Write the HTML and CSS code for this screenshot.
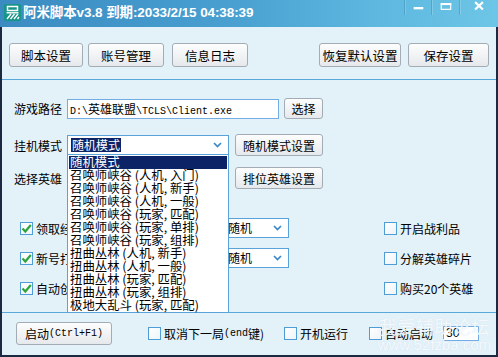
FILE: index.html
```html
<!DOCTYPE html>
<html lang="zh-CN">
<head>
<meta charset="utf-8">
<title>阿米脚本</title>
<link rel="stylesheet" href="styles.css">
</head>
<body>
<div class="window">
  <div class="titlebar">
    <svg class="app-icon" width="17" height="17" viewBox="0 0 17 17">
      <rect x="0" y="0" width="17" height="17" rx="2" fill="#17958b"/>
      <rect x="3.5" y="2.5" width="10" height="4" fill="none" stroke="#fff" stroke-width="1.5"/>
      <path d="M2.5 8.8h12" stroke="#fff" stroke-width="1.4"/>
      <path d="M3 15l4-5M6.5 15l4-5M10 15l4-5M13.5 15l1.5-2" stroke="#fff" stroke-width="1.4"/>
    </svg>
    <span class="title">阿米脚本v3.8 到期:2033/2/15 04:38:39</span>
    <div class="controls">
      <svg class="ctl ctl-min" width="27" height="15" viewBox="0 0 27 15"><rect x="9" y="7" width="10" height="2.4" fill="#fff"/></svg>
      <svg class="ctl ctl-max" width="28" height="15" viewBox="0 0 28 15"><rect x="9.6" y="3.6" width="9.8" height="5.8" fill="none" stroke="#fff" stroke-width="1.2"/><rect x="9" y="3" width="11" height="2" fill="#fff"/></svg>
      <svg class="ctl ctl-close" width="39" height="15" viewBox="0 0 39 15"><path d="M15.5 2l8 7.5M23.5 2l-8 7.5" stroke="#fff" stroke-width="2.2"/></svg>
    </div>
  </div>

  <div class="body">
    <div class="toolbar">
      <button class="btn tb-1">脚本设置</button>
      <button class="btn tb-2">账号管理</button>
      <button class="btn tb-3">信息日志</button>
      <button class="btn tb-4">恢复默认设置</button>
      <button class="btn tb-5">保存设置</button>
    </div>
    <div class="sep"></div>

    <div class="row row-path">
      <span class="lbl">游戏路径</span>
      <div class="input path"><span class="mono">D:\</span>英雄联盟<span class="mono">\TCLS\Client.exe</span></div>
      <button class="btn btn-choose">选择</button>
    </div>

    <div class="row row-mode">
      <span class="lbl">挂机模式</span>
      <div class="select sel-mode">
        <span class="sel-text">随机模式</span>
        <svg class="chev" width="9" height="6" viewBox="0 0 9 6"><path d="M1 1l3.5 3.5L8 1" fill="none" stroke="#3b87c9" stroke-width="1.7"/></svg>
        <ul class="droplist">
          <li class="active">随机模式</li>
          <li>召唤师峡谷 (人机, 入门)</li>
          <li>召唤师峡谷 (人机, 新手)</li>
          <li>召唤师峡谷 (人机, 一般)</li>
          <li>召唤师峡谷 (玩家, 匹配)</li>
          <li>召唤师峡谷 (玩家, 单排)</li>
          <li>召唤师峡谷 (玩家, 组排)</li>
          <li>扭曲丛林 (人机, 新手)</li>
          <li>扭曲丛林 (人机, 一般)</li>
          <li>扭曲丛林 (玩家, 匹配)</li>
          <li>扭曲丛林 (玩家, 组排)</li>
          <li>极地大乱斗 (玩家, 匹配)</li>
        </ul>
      </div>
      <button class="btn btn-side">随机模式设置</button>
    </div>

    <div class="row row-hero">
      <span class="lbl">选择英雄</span>
      <div class="select sel-hero"></div>
      <button class="btn btn-side">排位英雄设置</button>
    </div>

    <div class="options">
      <label class="cb-item"><span class="cb checked"><svg width="11" height="11" viewBox="0 0 11 11"><path d="M1.5 5.5l2.8 3L9.8 2" fill="none" stroke="#2ea53a" stroke-width="2.2"/></svg></span>领取经验卡</label>
      <div class="select sel-small"><span class="plain">随机</span><svg class="chev" width="9" height="6" viewBox="0 0 9 6"><path d="M1 1l3.5 3.5L8 1" fill="none" stroke="#3b87c9" stroke-width="1.7"/></svg></div>
      <span></span>
      <label class="cb-item"><span class="cb"></span>开启战利品</label>

      <label class="cb-item"><span class="cb checked"><svg width="11" height="11" viewBox="0 0 11 11"><path d="M1.5 5.5l2.8 3L9.8 2" fill="none" stroke="#2ea53a" stroke-width="2.2"/></svg></span>新号打野</label>
      <div class="select sel-small"><span class="plain">随机</span><svg class="chev" width="9" height="6" viewBox="0 0 9 6"><path d="M1 1l3.5 3.5L8 1" fill="none" stroke="#3b87c9" stroke-width="1.7"/></svg></div>
      <span></span>
      <label class="cb-item"><span class="cb"></span>分解英雄碎片</label>

      <label class="cb-item"><span class="cb checked"><svg width="11" height="11" viewBox="0 0 11 11"><path d="M1.5 5.5l2.8 3L9.8 2" fill="none" stroke="#2ea53a" stroke-width="2.2"/></svg></span>自动创建</label>
      <span></span>
      <span></span>
      <label class="cb-item"><span class="cb"></span>购买20个英雄</label>
    </div>

    <div class="sep sep-2"></div>

    <div class="footer">
      <button class="btn btn-start">启动<span class="mono">(Ctrl+F1)</span></button>
      <label class="cb-item f-1"><span class="cb"></span>取消下一局<span class="mono">(end</span>键)</label>
      <label class="cb-item f-2"><span class="cb"></span>开机运行</label>
      <label class="cb-item f-3"><span class="cb"></span>自动启动</label>
      <div class="input num">30</div>
    </div>
  </div>

  <div class="watermark">
    <span class="wm-cn">我爱辅助论坛</span>
    <span class="wm-url">www.52fzba.com</span>
  </div>
</div>
</body>
</html>
```

FILE: styles.css
```css
* { box-sizing: border-box; margin: 0; padding: 0; }

body {
  margin: 0;
  width: 498px;
  height: 357px;
  overflow: hidden;
  background: #e3f1f9;
  font-family: "Noto Sans CJK SC", "Liberation Sans", sans-serif;
  font-size: 12px;
  color: #000;
}

.window {
  position: relative;
  width: 498px;
  height: 357px;
  display: flex;
  flex-direction: column;
}

/* ---------- title bar ---------- */
.titlebar {
  height: 27px;
  flex: none;
  display: flex;
  align-items: flex-start;
  background: linear-gradient(90deg, #3a8bc1 0%, #489fd0 45%, #5db7df 75%, #6dc6e6 100%);
}

.app-icon {
  margin: 4px 0 0 4px;
  flex: none;
}

.title {
  margin: 3px 0 0 2px;
  color: #fff;
  font-family: "Liberation Sans", "Noto Sans CJK SC", sans-serif;
  font-weight: bold;
  font-size: 13.5px;
  line-height: 20px;
  white-space: nowrap;
  letter-spacing: -0.1px;
}

.controls {
  margin-left: auto;
  display: flex;
}

.ctl {
  display: block;
  border-left: 1px solid rgba(30, 90, 140, 0.25);
  box-shadow: inset 1px 0 0 rgba(255, 255, 255, 0.18);
}

/* ---------- body ---------- */
.body {
  flex: 1;
  display: flex;
  flex-direction: column;
  border-left: 2px solid #1c2940;
  border-right: 2px solid #1c2940;
  border-bottom: 2px solid #1c2940;
  background: #e3f1f9;
}

.btn {
  font-family: "Noto Sans CJK SC", "Liberation Sans", sans-serif;
  font-size: 12px;
  color: #000;
  border: 1px solid #a3acb5;
  border-radius: 3px;
  background: linear-gradient(#fdfdfd, #e6e9ec);
  display: flex;
  align-items: center;
  justify-content: center;
  white-space: nowrap;
  flex: none;
}

.mono {
  font-family: "Liberation Mono", "DejaVu Sans Mono", monospace;
  font-size: 10px;
}

.toolbar {
  display: flex;
  padding: 16px 7px 0 7px;
}

.toolbar .btn { height: 24px; font-size: 12.5px; }
.tb-1 { width: 74px; }
.tb-2 { width: 76px; margin-left: 5px; }
.tb-3 { width: 76px; margin-left: 8px; }
.tb-4 { width: 82px; margin-left: auto; }
.tb-5 { width: 81px; margin-left: 7px; }

.sep {
  height: 1px;
  background: #58a8db;
  margin-top: 12px;
  flex: none;
}

.sep-2 { margin-top: 14px; }

.row {
  display: flex;
  align-items: center;
  padding-left: 12px;
}

.lbl {
  width: 53px;
  flex: none;
  white-space: nowrap;
}

.row-path { margin-top: 18px; height: 21px; }
.row-mode { margin-top: 15px; height: 22px; }
.row-hero { margin-top: 11px; height: 22px; }

.input {
  background: #fff;
  border: 1px solid #74ade4;
  white-space: nowrap;
}

.path {
  width: 212px;
  height: 20px;
  line-height: 18px;
  padding-left: 2px;
}

.btn-choose { width: 39px; height: 21px; margin-left: 5px; }
.btn-side { width: 88px; height: 22px; margin-left: 6px; }

.select {
  position: relative;
  background: #fff;
  border: 1px solid #5aa2da;
  height: 20px;
  display: flex;
  align-items: center;
  flex: none;
}

.sel-mode, .sel-hero { width: 162px; }

.sel-text {
  margin-left: 3px;
  background: #0c2466;
  color: #fff;
  line-height: 14px;
  padding: 0 1px;
}

.chev {
  position: absolute;
  right: 6px;
  top: 6px;
}

.droplist {
  position: absolute;
  top: 18px;
  left: -1px;
  width: 162px;
  list-style: none;
  background: #fff;
  border: 1px solid #5aa2da;
  padding: 1px 1px 0 1px;
  z-index: 5;
}

.droplist li {
  height: 13px;
  line-height: 13px;
  font-size: 12.4px;
  padding-left: 1px;
  white-space: nowrap;
}

.droplist li.active {
  background: #0c2466;
  color: #fff;
}

/* ---------- options ---------- */
.options {
  margin-top: 29px;
  padding-left: 18px;
  display: grid;
  grid-template-columns: 204px 65px 95px auto;
  grid-auto-rows: 20px;
  row-gap: 10px;
  align-items: center;
}

.cb-item {
  display: flex;
  align-items: center;
  white-space: nowrap;
}

.cb {
  width: 13px;
  height: 13px;
  flex: none;
  border: 1px solid #4f9dd6;
  background: linear-gradient(135deg, #ffffff, #eef4f8);
  margin-right: 3px;
  display: flex;
  align-items: center;
  justify-content: center;
}

.sel-small {
  width: 65px;
  height: 20px;
}

.plain {
  margin-left: 3px;
  line-height: 14px;
}

/* ---------- footer ---------- */
.footer {
  margin-top: 9px;
  height: 23px;
  display: flex;
  align-items: center;
  padding-left: 14px;
}

.btn-start {
  width: 96px;
  height: 23px;
}

.f-1 { margin-left: 36px; width: 136px; }
.f-2 { width: 85px; }
.f-3 { width: 74px; }

.num {
  width: 36px;
  height: 15px;
  line-height: 13px;
  padding-left: 2px;
  font-family: "Liberation Sans", sans-serif;
}

/* ---------- watermark overlay ---------- */
.watermark {
  position: absolute;
  right: 7px;
  bottom: 4px;
  display: flex;
  flex-direction: column;
  align-items: center;
  color: rgba(255, 255, 255, 0.8);
  text-shadow: 0 0 1px rgba(180, 210, 230, 0.6);
  pointer-events: none;
  z-index: 10;
}

.wm-cn {
  font-size: 18px;
  line-height: 22px;
  letter-spacing: 0.5px;
}

.wm-url {
  font-family: "Liberation Sans", sans-serif;
  font-size: 15px;
  line-height: 16px;
}
```
